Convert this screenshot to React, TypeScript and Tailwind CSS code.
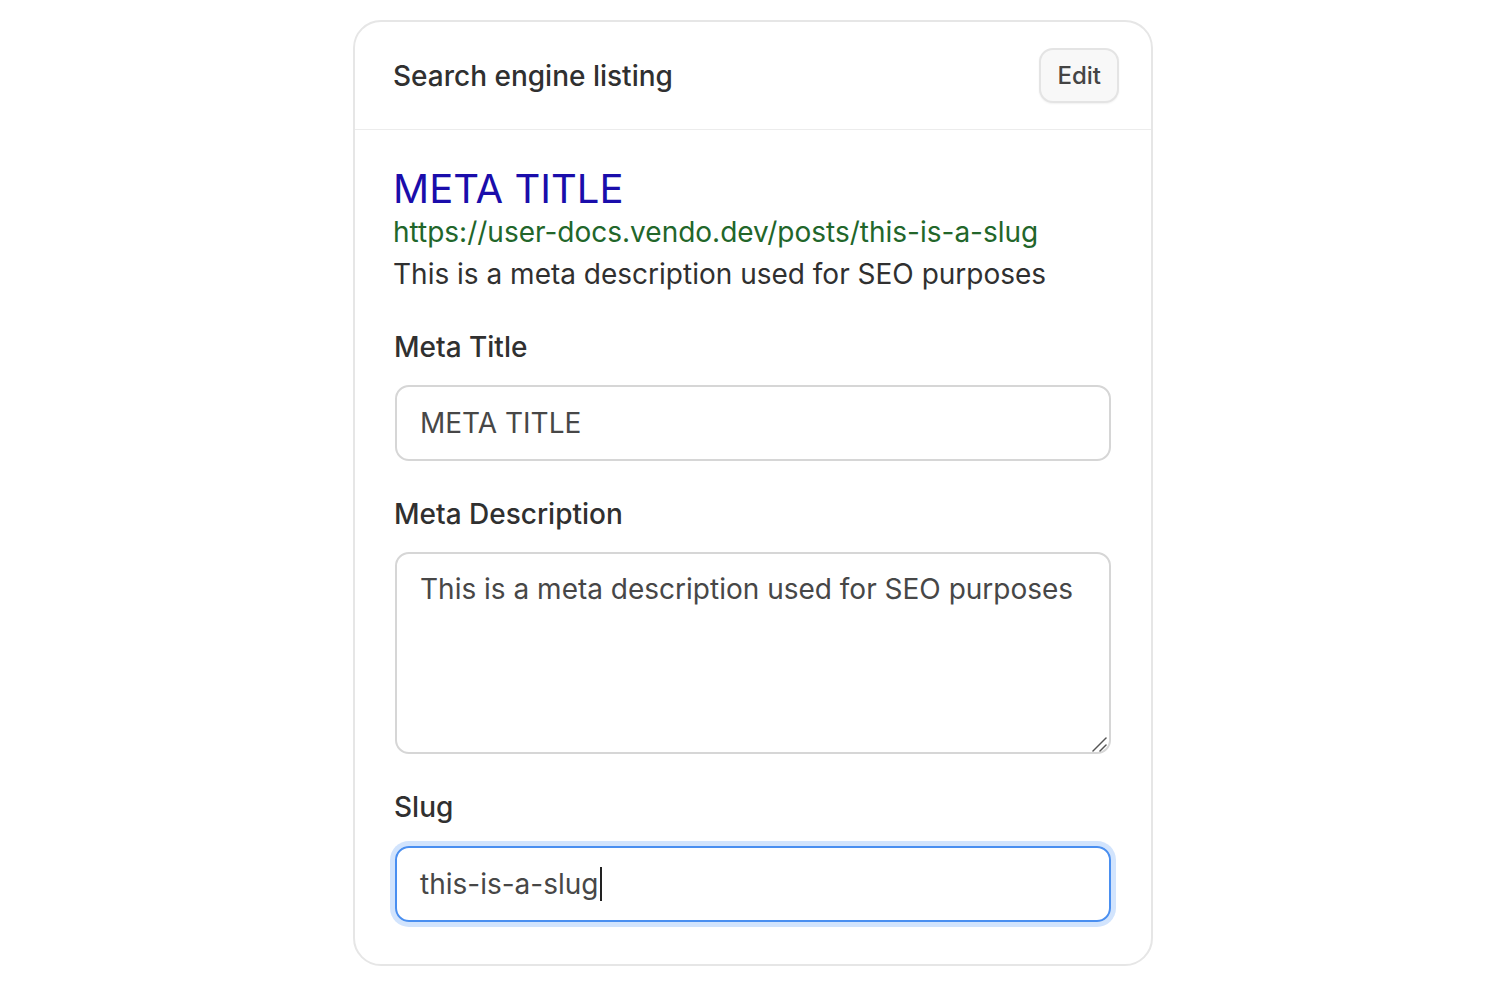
export default function App() {
  return (
    <div className="min-h-screen bg-white pt-[20px] font-['Inter','Noto_Sans',sans-serif] text-[#303030]">
      <div className="ml-[353px] w-[800px] rounded-[28px] border-2 border-[#e6e6e6] bg-white">
        {/* Header */}
        <div className="flex h-[108px] items-center justify-between border-b border-[#ececec] pl-[38px] pr-[32px]">
          <h2 className="text-[28px] font-medium leading-[42px] text-[#303030]">Search engine listing</h2>
          <button className="h-[55px] rounded-[14px] border-2 border-[#e4e4e4] bg-[#f8f8f8] px-[16px] text-[24px] font-medium text-[#444] shadow-[0_1px_2px_rgba(0,0,0,0.06)]">
            Edit
          </button>
        </div>

        {/* Body */}
        <div className="px-[40px] pt-[37px] pb-[42px]">
          {/* Preview */}
          <div className="-ml-[2px]">
            <p className="text-[40px] leading-[44px] text-[#1a0dab]">META TITLE</p>
            <p className="text-[28px] leading-[42px] text-[#22662a]">https://user-docs.vendo.dev/posts/this-is-a-slug</p>
            <p className="text-[28px] leading-[42px] text-[#303030]">This is a meta description used for SEO purposes</p>
          </div>

          {/* Meta Title */}
          <div className="mt-[31px]">
            <label className="-ml-[1px] mb-[17px] block text-[28px] font-medium leading-[42px]">Meta Title</label>
            <input
              readOnly
              value="META TITLE"
              className="block h-[76px] w-full rounded-[14px] border-2 border-[#d6d6d6] px-[23px] text-[28px] text-[#474747] outline-none"
            />
          </div>

          {/* Meta Description */}
          <div className="mt-[32px]">
            <label className="-ml-[1px] mb-[17px] block text-[28px] font-medium leading-[42px]">Meta Description</label>
            <div className="relative">
              <textarea
                readOnly
                defaultValue="This is a meta description used for SEO purposes"
                className="block h-[202px] w-full resize-none rounded-[14px] border-2 border-[#d6d6d6] px-[23px] py-[14px] text-[28px] leading-[42px] text-[#474747] outline-none"
              />
              <svg className="pointer-events-none absolute right-[4px] bottom-[2px]" width="16" height="16" viewBox="0 0 16 16">
                <path d="M2 15 L15 2" stroke="#555" strokeWidth="1.5" strokeLinecap="round" />
                <path d="M9 15 L15 9" stroke="#555" strokeWidth="1.5" strokeLinecap="round" />
              </svg>
            </div>
          </div>

          {/* Slug */}
          <div className="mt-[32px]">
            <label className="-ml-[1px] mb-[18px] block text-[28px] font-medium leading-[42px]">Slug</label>
            <div className="flex h-[76px] w-full items-center rounded-[14px] border-2 border-[#4a8ff0] px-[23px] text-[28px] text-[#474747] ring-[5px] ring-[#d2e4fd]">
              <span>this-is-a-slug</span>
              <span className="ml-[1px] inline-block h-[34px] w-[2px] bg-[#222]" />
            </div>
          </div>
        </div>
      </div>
    </div>
  )
}
